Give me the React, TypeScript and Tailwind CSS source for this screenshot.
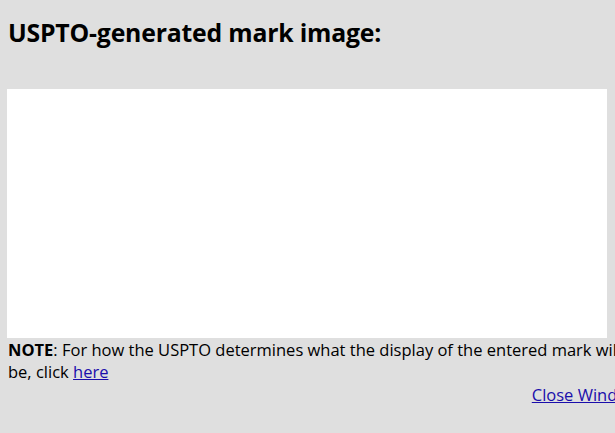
export default function App() {
  return (
    <div
      className="w-[615px] h-[433px] overflow-hidden bg-[#dfdfdf] text-black"
      style={{ fontFamily: '"Open Sans", "Noto Sans", sans-serif' }}
    >
      <div className="w-[660px] pl-2">
        <h1 className="pt-[16px] text-[24.8px] font-bold leading-[32px] tracking-[-0.2px]">
          USPTO-generated mark image:
        </h1>
        <div className="mt-[41px] -ml-[1px] w-[600px] h-[249px] bg-white" />
        <p className="mt-[1px] w-[632px] text-[16.5px] leading-[22px]">
          <span className="font-bold">NOTE</span>: For how the USPTO determines what the display of the entered mark will be, click{" "}
          <a href="#" className="text-[#1a0dab] underline">here</a>
        </p>
        <div className="mt-[1px] w-[632px] flex justify-end text-[16.5px] leading-[22px]">
          <a href="#" className="text-[#1a0dab] underline">Close Window</a>
        </div>
      </div>
    </div>
  );
}
